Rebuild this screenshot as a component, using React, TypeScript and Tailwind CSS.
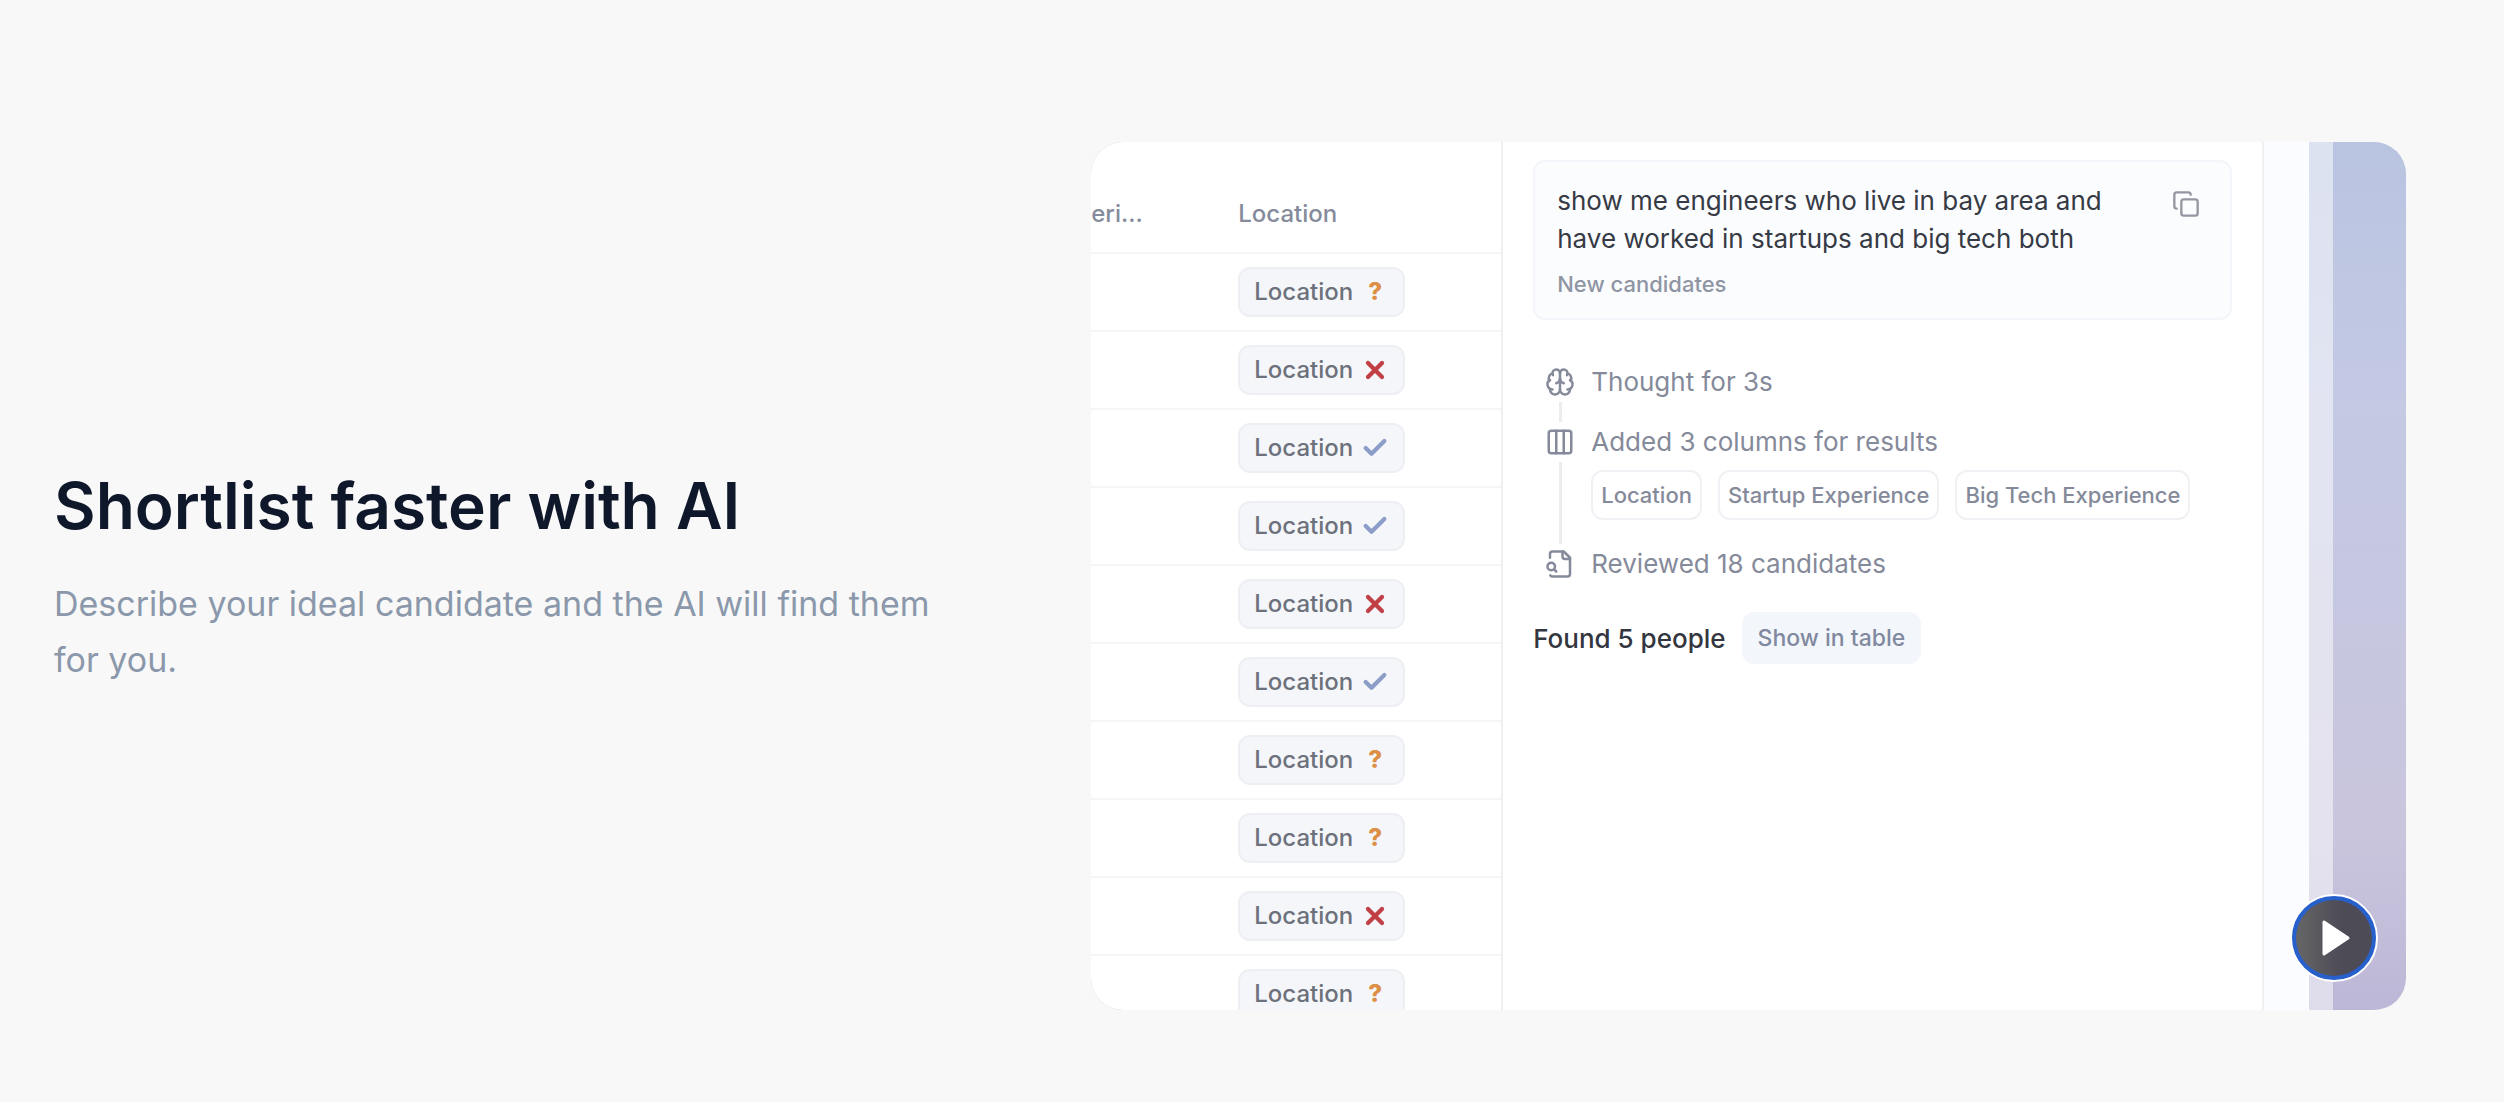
import { Brain, Check, Columns3, Copy, X } from "lucide-react";
import type { ReactNode } from "react";

type Status = "unknown" | "no" | "yes";

const rows: Status[] = ["unknown", "no", "yes", "yes", "no", "yes", "unknown", "unknown", "no", "unknown"];

const columns = ["Location", "Startup Experience", "Big Tech Experience"];

function StatusMark({ status }: { status: Status }) {
  if (status === "no") return <X aria-label="No match" className="size-7 text-[#c13f45]" strokeWidth={3.6} />;
  if (status === "yes") return <Check aria-label="Match" className="size-7 text-[#8c9dc8]" strokeWidth={3.6} />;
  return <span className="w-7 text-center text-2xl font-extrabold text-[#dc8f45]">?</span>;
}

function ReviewIcon() {
  return (
    <svg
      viewBox="0 0 24 24"
      className="size-[30px]"
      fill="none"
      stroke="currentColor"
      strokeWidth="2"
      strokeLinecap="round"
      strokeLinejoin="round"
      aria-hidden="true"
    >
      <path d="M14 2v4a2 2 0 0 0 2 2h4" />
      <path d="M4.268 21a2 2 0 0 0 1.727 1H18a2 2 0 0 0 2-2V7l-5-5H6a2 2 0 0 0-2 2v3" />
      <path d="m9 18-1.5-1.5" />
      <circle cx="5" cy="14" r="3" />
    </svg>
  );
}

function ResultsTable() {
  return (
    <div className="w-[412px] shrink-0 overflow-hidden border-r-2 border-[#f0f0f2]">
      <table className="w-full table-fixed border-collapse text-left">
        <thead>
          <tr className="border-b-2 border-[#f5f5f6] text-2xl text-[#858b9b]">
            <th scope="col" className="w-[147px] pt-14 pb-[22px] font-medium">eri...</th>
            <th scope="col" className="pt-14 pb-[22px] font-medium">Location</th>
          </tr>
        </thead>
        <tbody>
          {rows.map((status, i) => (
            <tr key={i} className="h-[78px] border-b-2 border-[#f5f5f6]">
              <td />
              <td>
                <span className="inline-flex h-[50px] items-center gap-2 rounded-xl border-2 border-[#eeeff3] bg-[#f4f6fa] px-[14px] align-middle text-2xl font-medium text-[#6d717c]">
                  Location
                  <StatusMark status={status} />
                </span>
              </td>
            </tr>
          ))}
        </tbody>
      </table>
    </div>
  );
}

function Step({ icon, label, last, children }: { icon: ReactNode; label: string; last?: boolean; children?: ReactNode }) {
  return (
    <li className="flex gap-4">
      <div className="flex w-[30px] flex-col items-center gap-1">
        <span className="flex h-8 items-center">{icon}</span>
        {!last && <span className="mb-1 w-[3px] flex-1 bg-[#ececef]" />}
      </div>
      <div className={last ? "" : "pb-7"}>
        <p className="text-[26px] leading-8">{label}</p>
        {children}
      </div>
    </li>
  );
}

function AssistantPanel() {
  return (
    <div className="min-w-0 flex-1 border-r-2 border-[#f0f0f2] px-[30px] pt-[18px]">
      <div className="flex items-start justify-between rounded-xl border-2 border-[#f3f5fa] bg-[#fbfcfe] px-[22px] pt-5 pb-[18px]">
        <div>
          <p className="max-w-[580px] text-[26px] leading-[38px] text-[#363a45]">
            show me engineers who live in bay area and have worked in startups and big tech both
          </p>
          <p className="mt-[10px] text-[22px] leading-8 font-medium text-[#8f95a4]">New candidates</p>
        </div>
        <button type="button" aria-label="Copy" className="mt-2 mr-2 text-[#9497a1]">
          <Copy className="size-7" strokeWidth={2} />
        </button>
      </div>
      <ol className="mt-[46px] ml-3 text-[#858a9a]">
        <Step icon={<Brain className="size-[30px]" />} label="Thought for 3s" />
        <Step icon={<Columns3 className="size-[30px]" />} label="Added 3 columns for results">
          <ul className="mt-3 flex gap-4">
            {columns.map((name) => (
              <li
                key={name}
                className="flex h-[50px] items-center rounded-xl border-2 border-[#f0f1f4] px-2 text-[22px] font-medium whitespace-nowrap"
              >
                {name}
              </li>
            ))}
          </ul>
        </Step>
        <Step icon={<ReviewIcon />} label="Reviewed 18 candidates" last />
      </ol>
      <div className="mt-8 flex items-center gap-4">
        <p className="text-[26px] font-medium text-[#33363f]">Found 5 people</p>
        <button type="button" className="h-[52px] rounded-xl bg-[#f3f6fb] px-4 text-[23px] font-medium text-[#8189a0]">
          Show in table
        </button>
      </div>
    </div>
  );
}

export default function App() {
  return (
    <main className="flex min-h-screen items-center justify-between bg-[#f8f8f8] pt-[50px] pr-[98px] pl-[54px] font-[Inter,sans-serif]">
      <section className="w-[38%]">
        <h2 className="text-[64px] leading-[84px] font-semibold text-[#0f172a]">Shortlist faster with AI</h2>
        <p className="mt-7 text-[34px] leading-[56px] text-[#8b98ab]">
          Describe your ideal candidate and the AI will find them for you.
        </p>
      </section>
      <section
        aria-label="Product preview"
        className="relative flex aspect-[1315/868] w-[55.9%] overflow-hidden rounded-[32px] bg-[linear-gradient(to_bottom,#b9c4e0,#c4c9e4_30%,#c9c5dd_80%,#bdb7d7)]"
      >
        <div className="flex min-w-0 flex-1 bg-white">
          <ResultsTable />
          <AssistantPanel />
        </div>
        <div className="w-[45px] shrink-0 bg-[#fafcff]" />
        <div className="w-6 shrink-0 bg-white/50" />
        <div className="w-[73px] shrink-0" />
        <button
          type="button"
          aria-label="Play video"
          className="absolute right-7 bottom-7 flex size-[88px] items-center justify-center rounded-full border-2 border-white bg-[#2860cb] p-1"
        >
          <span className="flex size-full items-center justify-center rounded-full bg-linear-to-r from-[#666] to-[#4d4b56] to-60%">
            <svg viewBox="0 0 28 36" className="ml-1 h-9 w-7" aria-hidden="true">
              <path d="M2 2v32L26 18z" fill="#fff" stroke="#fff" strokeWidth="3" strokeLinejoin="round" />
            </svg>
          </span>
        </button>
      </section>
    </main>
  );
}
